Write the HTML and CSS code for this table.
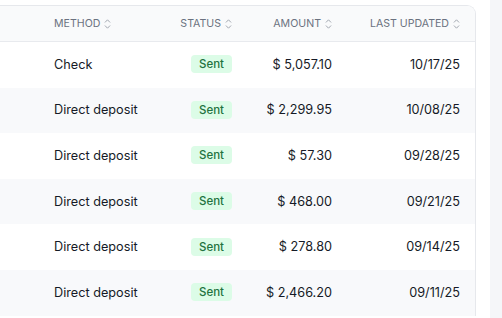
FILE: index.html
```html
<!DOCTYPE html>
<html>
<head>
<meta charset="utf-8">
<link rel="stylesheet" href="styles.css">
</head>
<body>
<div class="page">
  <div class="card">
    <div class="row head">
      <div class="th left">METHOD <svg class="sort" viewBox="0 0 7 12"><path d="M1.2 4.2 L3.5 1.8 L5.8 4.2 M1.2 7.8 L3.5 10.2 L5.8 7.8"/></svg></div>
      <div class="th">STATUS <svg class="sort" viewBox="0 0 7 12"><path d="M1.2 4.2 L3.5 1.8 L5.8 4.2 M1.2 7.8 L3.5 10.2 L5.8 7.8"/></svg></div>
      <div class="th">AMOUNT <svg class="sort" viewBox="0 0 7 12"><path d="M1.2 4.2 L3.5 1.8 L5.8 4.2 M1.2 7.8 L3.5 10.2 L5.8 7.8"/></svg></div>
      <div class="th">LAST UPDATED <svg class="sort" viewBox="0 0 7 12"><path d="M1.2 4.2 L3.5 1.8 L5.8 4.2 M1.2 7.8 L3.5 10.2 L5.8 7.8"/></svg></div>
    </div>
    <div class="row">
      <div class="td left">Check</div>
      <div class="td"><span class="badge">Sent</span></div>
      <div class="td">$ 5,057.10</div>
      <div class="td">10/17/25</div>
    </div>
    <div class="row alt">
      <div class="td left">Direct deposit</div>
      <div class="td"><span class="badge">Sent</span></div>
      <div class="td">$ 2,299.95</div>
      <div class="td">10/08/25</div>
    </div>
    <div class="row">
      <div class="td left">Direct deposit</div>
      <div class="td"><span class="badge">Sent</span></div>
      <div class="td">$ 57.30</div>
      <div class="td">09/28/25</div>
    </div>
    <div class="row alt">
      <div class="td left">Direct deposit</div>
      <div class="td"><span class="badge">Sent</span></div>
      <div class="td">$ 468.00</div>
      <div class="td">09/21/25</div>
    </div>
    <div class="row">
      <div class="td left">Direct deposit</div>
      <div class="td"><span class="badge">Sent</span></div>
      <div class="td">$ 278.80</div>
      <div class="td">09/14/25</div>
    </div>
    <div class="row alt">
      <div class="td left">Direct deposit</div>
      <div class="td"><span class="badge">Sent</span></div>
      <div class="td">$ 2,466.20</div>
      <div class="td">09/11/25</div>
    </div>
  </div>
  <div class="side"></div>
</div>
</body>
</html>
```
FILE: styles.css
```css
html, body {
  margin: 0;
  padding: 0;
  background: #ffffff;
  overflow: hidden;
}
.page {
  display: flex;
  height: 318px;
  font-family: Inter, "Liberation Sans", sans-serif;
  color: #151a26;
}
.card {
  margin-top: 5px;
  margin-left: -20px;
  width: 496px;
  flex: none;
  box-sizing: border-box;
  border: 1px solid #e6e8ec;
  border-bottom: none;
  border-radius: 9px 9px 0 0;
  overflow: hidden;
  align-self: flex-start;
}
.side {
  margin-left: 14px;
  flex: 1;
  background: #f5f6f9;
}
.row {
  display: grid;
  grid-template-columns: 106px 72px 100px 128px;
  padding-left: 73px;
  padding-right: 15px;
  height: 45.6px;
  align-items: center;
  font-size: 12.7px;
  padding-bottom: 1px;
  box-sizing: border-box;
}
.row.alt {
  background: #f8f9fb;
}
.row.head {
  height: 35px;
  padding-bottom: 0;
  background: #f9fafb;
  border-bottom: 1px solid #e8eaee;
  box-sizing: content-box;
}
.th {
  display: flex;
  align-items: center;
  justify-content: flex-end;
  gap: 4px;
  font-size: 10.6px;
  color: #6b7280;
  white-space: nowrap;
}
.th.left, .td.left {
  justify-content: flex-start;
  text-align: left;
}
.sort {
  width: 7px;
  height: 12px;
  fill: none;
  stroke: #a3a8b1;
  stroke-width: 1;
  stroke-linecap: round;
  stroke-linejoin: round;
}
.td {
  display: flex;
  justify-content: flex-end;
  white-space: nowrap;
}
.badge {
  display: inline-block;
  background: #dcfce7;
  color: #23733f;
  font-size: 11.5px;
  font-weight: 500;
  line-height: 18px;
  padding: 0 8px;
  border-radius: 4px;
}
```
